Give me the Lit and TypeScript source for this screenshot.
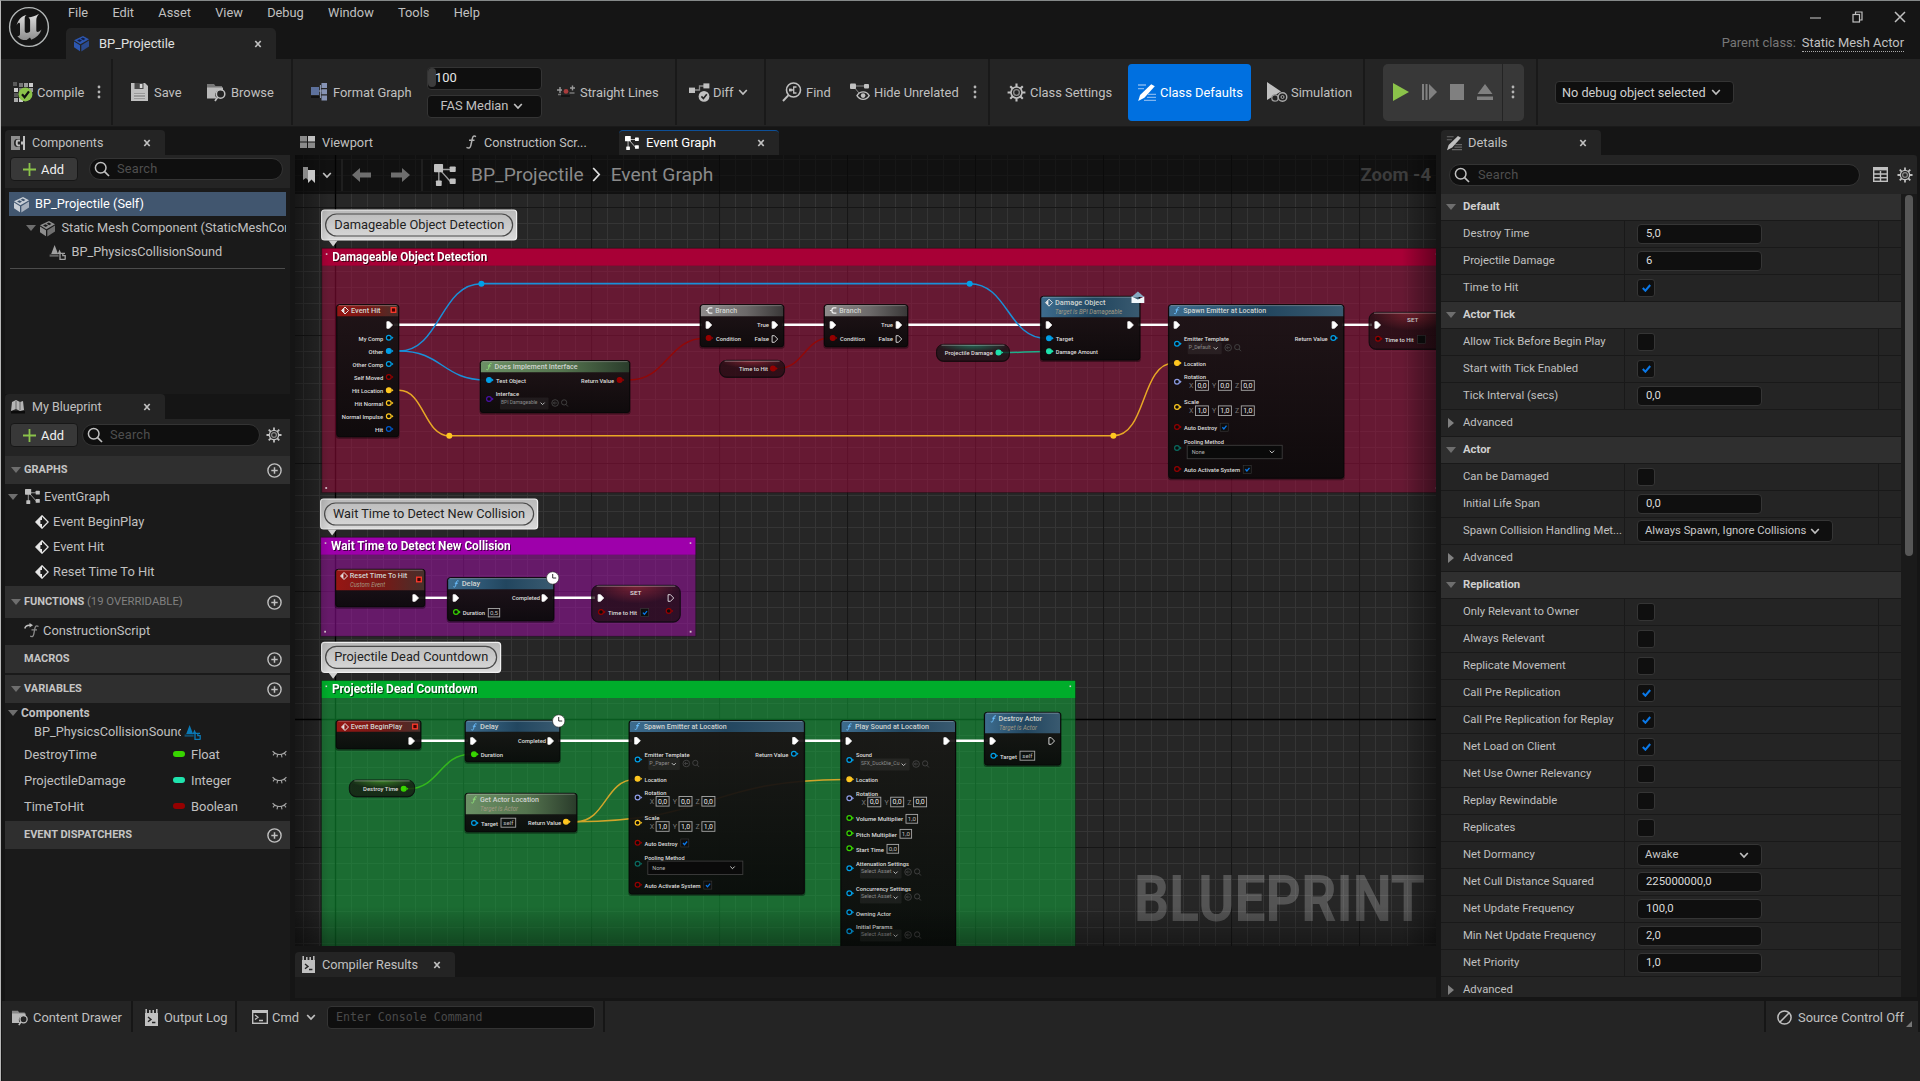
import { LitElement, html, svg, css, nothing } from "lit";
import { customElement } from "lit/decorators.js";

/* ---------- icons ---------- */
const icon = (w: number, h: number, body: unknown, vb = `0 0 ${w} ${h}`) =>
  html`<svg class="ic" width=${w} height=${h} viewBox=${vb} fill="none">${body}</svg>`;

const chevron = () => icon(10, 8, svg`<path d="M1.2 2l3.8 4 3.8-4" stroke="#c0c0c0" stroke-width="1.7"/>`);
const closeX = () => icon(8, 8, svg`<path d="M1.3 1l5.4 6M6.7 1L1.3 7" stroke="#c0c0c0" stroke-width="1.7"/>`);
const triDown = () => icon(10, 6, svg`<path d="M0 0h10L5 6z" fill="#6e6e6e"/>`);
const triRight = () => icon(6, 10, svg`<path d="M0 0v10l6-5z" fill="#808080"/>`);
const dots = () => icon(4, 14, svg`<g fill="#b4b4b4"><circle cx="2" cy="2" r="1.4"/><circle cx="2" cy="7" r="1.4"/><circle cx="2" cy="12" r="1.4"/></g>`);
const lens = () => icon(16, 16, svg`<circle cx="6.7" cy="6.7" r="5.3" stroke="#c0c0c0" stroke-width="1.5"/><path d="M10.6 10.6l4.4 4.4" stroke="#c0c0c0" stroke-width="1.7"/>`);
const plus = () => icon(13, 13, svg`<path d="M6.5 0v13M0 6.5h13" stroke="#8bc34a" stroke-width="1.8"/>`);
const addCircle = () => icon(15, 15, svg`<circle cx="7.5" cy="7.5" r="6.6" stroke="#c0c0c0" stroke-width="1.4"/><path d="M7.5 4.3v6.4M4.3 7.5h6.4" stroke="#c0c0c0" stroke-width="1.5"/>`);
const gear = (s = 16) => icon(s, s, svg`
  <g stroke="#c0c0c0" stroke-width="2.2"><path d="M10 .6v18.8M.6 10h18.8M3.4 3.4l13.2 13.2M16.6 3.4L3.4 16.6"/></g>
  <circle cx="10" cy="10" r="6.6" fill="#c0c0c0"/><circle cx="10" cy="10" r="4.9" fill="#242424"/>
  <circle cx="10" cy="10" r="3" stroke="#8a8a8a" stroke-width="1.5"/>`, "0 0 20 20");
const cube = (c: string, d: string) => icon(17, 17, svg`
  <path d="M1 5.3L10 1l6 3.2-8.6 5z" fill=${c}/><path d="M1 6.5l6 3.8v6L1 12.3z" fill=${c}/><path d="M8.3 10.3L16 5.6v5.8l-7.7 5z" fill=${c} opacity=".75"/>
  <path d="M4 5.4l2.4-1.2L9 5.6 6.8 7zM7.6 3.7l2.2-1.1 2.7 1.4-2.2 1.2z" fill=${d}/>`);
const graphIc = (s = 16, c = "#c0c0c0") => icon(s, s, svg`
  <path d="M4 4h9M5 5l8 9M3.5 5v9" stroke=${c} stroke-width="1" opacity=".8"/>
  <g fill=${c}><rect width="6.6" height="6" rx=".6"/><rect x="11.4" y="1.8" width="4.4" height="4" rx=".6"/><rect x="11.4" y="10.6" width="4.4" height="4" rx=".6"/><rect x="1.4" y="12" width="4.2" height="4" rx=".6"/></g>`, "0 0 16 16");
const logIc = () => icon(13, 17, svg`<path d="M0 4h13v13H0z" fill="#c0c0c0"/><path d="M1.2 0v5M4.8 1v4M8.2 1v4M11.8 0v5" stroke="#c0c0c0" stroke-width="1.5"/>
  <path d="M3 8l3 2.4-3 2.4M7 13.5h3.4" stroke="#242424" stroke-width="1.4"/>`);
const folder = (s: number, a: string) => icon(s, s, svg`<path d="M0 2h7l1.5 2H15v3H0z" fill=${a}/><path d="M0 5.4h16V9a4.6 4.6 0 0 0-6 7.4H0z" fill="#b9b9b9"/>
  <circle cx="13.6" cy="12" r="4.2" stroke="#c0c0c0" stroke-width="1.5"/><path d="M10.6 15.2L8 19" stroke="#c0c0c0" stroke-width="1.7"/>`, "0 0 20 20");
const eventIc = () => icon(14, 14, svg`<path d="M7 .8L13.2 7 7 13.2.8 7z" stroke="#e6e6e6" stroke-width="1.3"/><path d="M7 1v4h2v4H7v4L1 7z" fill="#e6e6e6"/><path d="M5.4 5H9v4H5.4z" fill="#1a1a1a"/>`);
const cones = (c: string) => icon(17, 16, svg`<path d="M5.6 1l3.5 9H2.2zM10.5 5.4l2 4.6H8.6z" fill=${c}/><path d="M.6 10.5h9v2.2h-9z" fill=${c} opacity=".55"/><path d="M16 9.4h-5v6h5M13.8 8.7v3h2.4v4" stroke=${c} stroke-width="1.3"/>`);
const lashes = () => icon(15, 8, svg`<path d="M.6 1.2c3.6 4.4 10.2 4.4 13.8 0M2.6 3.2L1 5.4M5.6 4.6l-.6 2.7M9.4 4.6l.6 2.7M12.4 3.2L14 5.4" stroke="#a5a5a5" stroke-width="1.1"/>`);
const pencil = (c: string, l: string, s = 19) => icon(s, s, svg`<path d="M1 2h8M1 5.6h6M11 11.4h8M10 14.4h9M7 17.4h12" stroke=${l} stroke-width="1.3"/><path d="M14.2 1.2l3.6 2L7.4 14.8 1.2 18l1.9-6z" fill=${c}/>`, "0 0 19 19");

const compileIc = () => icon(20, 20, svg`
  <g fill="#9c9c9c"><rect width="4" height="4" fill="#5a5a5a"/><rect x="6" y="1" width="4" height="4" fill="#777"/><rect x="11" y="1" width="4" height="4"/><rect x="16" y="1" width="4" height="4" fill="#ccc"/>
  <rect x="1" y="6" width="4" height="4" fill="#ccc"/><rect x="6" y="6" width="4" height="4" fill="#777"/><rect x="1" y="11" width="4" height="4" fill="#5a5a5a"/><rect x="1" y="16" width="4" height="4" fill="#aaa"/><rect x="6" y="16" width="4" height="4" fill="#ccc"/><rect x="16" y="6" width="4" height="4"/></g>
  <circle cx="12.4" cy="12.4" r="7" fill="#8bc34a"/><path d="M9 12.2l2.6 3L16 9.4" stroke="#111" stroke-width="2.2"/>`);
const saveIc = () => icon(20, 20, svg`<path d="M1 1h14l3 3v15H1z" fill="#c0c0c0"/><path d="M4.5 1h9v6h-9z" fill="#4a4a4a"/><path d="M9.8 2h2.6v4H9.8z" fill="#d8d8d8"/><path d="M4 11h11v6H4z" fill="#9a9a9a"/><path d="M4 12.5h11M4 15.5h11" stroke="#c8c8c8"/>`);
const formatIc = () => icon(20, 20, svg`<rect x="2" y="5" width="8" height="8" fill="#5d719c"/><path d="M12.5 1h5.5v5h-5.5zM12.5 7.3h5.5v5h-5.5zM12.5 13.6h5.5v5h-5.5z" fill="#8693b5"/><path d="M2 15h9" stroke="#111" stroke-width="2"/><path d="M10 9h2.5M11.4 3v13" stroke="#9aa5c0"/>`);
const straightIc = () => icon(20, 20, svg`<path d="M1 8h5M4 5v6M14 6h5M16.5 3.5v5" stroke="#9a9a9a" stroke-width="1.4"/><path d="M5 14h9" stroke="#111" stroke-width="1.6"/><circle cx="10" cy="9.4" r="2.4" fill="#a83c3c"/><path d="M2 12.5h3M13.5 11h5" stroke="#777" stroke-width="1.4"/>`);
const diffIc = () => icon(21, 20, svg`<path d="M5 8h5.5V4H16" stroke="#8a8a8a" stroke-width="1.3"/><rect y="5.6" width="6" height="5.4" fill="#c0c0c0"/><rect x="14.4" y="1.4" width="6" height="5" fill="#c0c0c0"/><circle cx="15" cy="14.4" r="5.4" fill="#c0c0c0"/><path d="M12.4 14.4l2 2.2 3.4-4.4" stroke="#242424" stroke-width="1.6"/>`);
const findIc = () => icon(20, 20, svg`<circle cx="11.5" cy="8" r="7" stroke="#c0c0c0" stroke-width="1.6"/><path d="M6.3 13.4L1 19" stroke="#c0c0c0" stroke-width="2"/><path d="M14.5 5h-2.8v6h2.8M8 8h3.7" stroke="#c0c0c0" stroke-width="1.3"/><rect x="7" y="6.6" width="2.8" height="2.8" fill="#c0c0c0"/>`);
const hideIc = () => icon(20, 20, svg`<path d="M4 4h12M4 5l5 6" stroke="#8a8a8a"/><rect y="1.6" width="6" height="5.4" rx="1" fill="#c0c0c0"/><rect x="14" y="2" width="5" height="4.6" rx="1" fill="#c0c0c0"/><path d="M7 13.6c3-5 9.4-5 12.2 0-2.8 5-9.2 5-12.2 0z" fill="#242424" stroke="#c0c0c0" stroke-width="1.4"/><circle cx="13.1" cy="13.6" r="2.3" fill="#c0c0c0"/>`);
const simIc = () => icon(21, 21, svg`<path d="M0 0l14 9.5L0 18z" fill="#c0c0c0"/><circle cx="8" cy="16" r="3.2" fill="#242424" stroke="#999" stroke-width="1.3"/><circle cx="15.5" cy="15" r="4.3" fill="#242424" stroke="#aaa" stroke-width="1.4"/><circle cx="15.5" cy="15" r="1.5" stroke="#aaa"/>`);
const ueLogo = () => icon(42, 42, svg`
  <defs><linearGradient id="ug" x1="0" y1="0" x2="0" y2="1"><stop offset="0" stop-color="#e0e0e0"/><stop offset="1" stop-color="#8c8c8c"/></linearGradient></defs>
  <circle cx="21" cy="21" r="19.4" stroke="#b4b8b8" stroke-width="1.4"/>
  <path d="M8.5 19.5C10 14 13.5 10 18.5 9c-1.3 1-1.8 2-1.8 3.800v12c0 1.300.9 2.100 2 2.100 1.400 0 2.600-.8 3.400-1.700V14.600c0-1.500-.5-2.400-1.600-3.200C24 11 27.600 9.900 31 7.800c-1.900 2.300-2.700 4-2.700 6.400v10.400c0 1 .6 1.400 1.300 1.400 1.100 0 2.600-1 3.900-2.500-1.600 4.900-5.200 8.300-10.200 10.200l-1.300-2.300-3.400 2.700c-4 .2-7.300-1.300-9.300-4.200 1.500.2 2.700-.4 2.700-2v-9.600c0-1-.4-1.500-1.100-1.500-.8 0-1.500.9-2.400 2.700z" fill="url(#ug)"/>`);
const fnIc = (c = "#b0b0b0") => icon(12, 14, svg`<path d="M11 1.6C8.2 0 7.6 2 7 5L5.8 10.6C5.2 13 4 13.7 1.5 12.4M4 5.3h5.5" stroke=${c} stroke-width="1.5"/>`);

/* ---------- graph canvas ---------- */
const C = {
  obj: "#00a0e8", bool: "#950000", vec: "#ffc720", rot: "#8f9ee8", flt: "#38d500",
  int: "#1fe3ad", cls: "#4a10a8", enm: "#0a6b60", hit: "#0059cb",
};
const ends = (x: number, y: number, s: string, w: number, cls = "pin", dy = 2.2) =>
  svg`<text class=${cls} x=${x} y=${y + dy} textLength=${w} lengthAdjust="spacingAndGlyphs">${s}</text>`;
const pin = (x: number, y: number, c: string, on = false) => svg`
  <circle cx=${x} cy=${y} r="2.4" fill=${on ? c : "#0b0b0b"} stroke=${c} stroke-width="1.2"/><path d=${`M${x + 2.9} ${y - 1.5}l1.8 1.5-1.8 1.5z`} fill=${c}/>`;
const exec = (x: number, y: number, on = true) =>
  svg`<path d=${`M${x - 2.6} ${y - 3.3}h2.4l3.2 3.3-3.2 3.3h-2.4z`} fill=${on ? "#fff" : "none"} stroke="#fff" stroke-width=".8"/>`;
const fGlyph = (x: number, y: number, c = "#6cc0ff") =>
  svg`<path d=${`M${x + 2.6} ${y - 3}c-1.6-.7-2 .3-2.3 1.7l-.7 3c-.3 1.3-1 1.6-2.2 1M${x - 1.2} ${y - 0.8}h3`} stroke=${c} stroke-width="1" fill="none"/>`;
const diamond = (x: number, y: number) =>
  svg`<path d=${`M${x} ${y - 3.5}l3.5 3.5-3.5 3.5-3.5-3.5z`} fill="none" stroke="#e8e8e8" stroke-width="1"/><path d=${`M${x - 0.6} ${y - 2.8}v5.6L${x - 3.2} ${y}z`} fill="#e8e8e8"/>`;
const branchGlyph = (x: number, y: number) =>
  svg`<path d=${`M${x + 3} ${y - 2.6}h-2.5q-2 0-2 2.6t2 2.6h2.5M${x - 3.5} ${y}h2`} stroke="#eee" stroke-width="1.2" fill="none"/>`;
const check = (x: number, y: number, on = true) => svg`
  <rect x=${x} y=${y} width="8" height="8" fill="#0d0d0d" stroke="#3a3a3a" stroke-width=".6"/>
  ${on ? svg`<path d=${`M${x + 2.2} ${y + 4}l1.5 1.7 2.6-3.2`} stroke="#0a78e8" stroke-width="1.3" fill="none"/>` : nothing}`;
const vbox = (x: number, y: number, w: number, s: string, h = 9.6) => svg`
  <rect x=${x} y=${y - h / 2} width=${w} height=${h} fill="none" stroke="#a8a8a8" stroke-width=".9"/>
  <text class=${h < 9.5 ? "val small" : "val"} x=${x + w / 2} y=${y + 2.3} text-anchor="middle">${s}</text>`;
const axes = (px: number, y: number, v: string) => ["X", "Y", "Z"].map((a, i) => svg`
  <text class="axis" x=${px + 14.3 + i * 22.9} y=${y + 2.5} text-anchor="middle">${a}</text>${vbox(px + 18.5 + i * 22.9, y, 13, v)}`);
const asset = (x: number, y: number, w: number, s: string, tw: number) => svg`
  <rect x=${x} y=${y - 5.5} width=${w} height="12" rx="1" fill="#fff" opacity=".06"/>
  ${ends(x + 1, y - 1, s, tw, "dim")}
  <path d=${`M${x + w - 8} ${y - 0.4}l2 2 2-2`} stroke="#bbb" stroke-width="1" fill="none"/>
  <g stroke="#444" stroke-width=".9" fill="none"><circle cx=${x + w + 6.5} cy=${y} r="3.3"/><path d=${`M${x + w + 8.3} ${y}h-3.5m1.5-1.5l-1.5 1.5 1.5 1.5`}/>
  <circle cx=${x + w + 15.5} cy=${y - 0.6} r="2.6"/><path d=${`M${x + w + 17.3} ${y + 1.3}l2 2.2`}/></g>`;
const node = (x: number, y: number, w: number, h: number, th: number, tint: string) => svg`
  <rect x=${x - 1} y=${y} width=${w + 2} height=${h + 2} rx="3" fill="#000" opacity=".4"/>
  <rect x=${x} y=${y} width=${w} height=${h} rx="2.5" fill="url(#body)" stroke="#080808" stroke-width="1"/>
  <path d=${`M${x + 0.5} ${y + th}V${y + 2.5}q0-2 2-2h${w - 5}q2 0 2 2V${y + th}z`} fill=${`url(#${tint})`}/>
  <path d=${`M${x + 2} ${y + 0.9}h${w - 4}`} stroke="#fff" opacity=".3" stroke-width=".9"/>`;
const pill = (x: number, y: number, w: number, h: number, tint: string) => svg`
  <rect x=${x} y=${y + 0.8} width=${w} height=${h} rx="7" fill="#000" opacity=".4"/>
  <rect x=${x} y=${y} width=${w} height=${h} rx="7" fill="#160d10" fill-opacity=".55" stroke="#0a0a0a" stroke-width=".8"/>
  <rect x=${x + 0.8} y=${y + 0.6} width=${w - 1.6} height=${h - 1.6} rx="6.5" fill=${`url(#${tint})`}/>
  <path d=${`M${x + 5} ${y + 0.9}h${w - 10}`} stroke="#fff" opacity=".4" stroke-width=".9"/>`;
const wire = (x1: number, y1: number, x2: number, y2: number, c: string, k = 0.5) =>
  svg`<path d=${`M${x1} ${y1}C${x1 + (x2 - x1) * k} ${y1} ${x2 - (x2 - x1) * k} ${y2} ${x2} ${y2}`} stroke=${c} stroke-width="1.5" fill="none"/>`;
const run = (x1: number, x2: number, y: number) => svg`<path d=${`M${x1} ${y}H${x2}`} stroke="#fff" stroke-width="2.4"/>`;
const knot = (x: number, y: number, c: string) => svg`<circle cx=${x} cy=${y} r="3" fill=${c}/>`;
const clock = (x: number, y: number) => svg`<circle cx=${x} cy=${y} r="6.2" fill="#fff" stroke="#222" stroke-width=".6"/><path d=${`M${x} ${y - 4}v4h3.5`} stroke="#333" stroke-width="1" fill="none"/>`;
const redBox = (x: number, y: number) => svg`<rect x=${x - 2.3} y=${y - 2.3} width="4.6" height="4.6" fill="#400" stroke="#ff3a2c" stroke-width="1.3"/>`;
const region = (x: number, y: number, w: number, h: number, th: number, head: string, fill: string, s: string, tw: number) => svg`
  <rect x=${x} y=${y + th} width=${w} height=${h - th} fill=${fill} opacity=".52"/>
  <rect x=${x} y=${y} width=${w} height=${th} fill=${head}/>
  <rect x=${x} y=${y} width=${w} height=${h} fill="none" stroke="#000" opacity=".3"/>
  <g fill="#d8c8d0"><rect x=${x + 4} y=${y + 5} width="1.6" height="1.6"/><rect x=${x + 3.5} y=${y + h - 5.5} width="1.8" height="1.8"/><rect x=${x + w - 6} y=${y + 5} width="1.6" height="1.6"/><rect x=${x + w - 6} y=${y + h - 5.5} width="1.8" height="1.8"/></g>
  ${ends(x + 10.4, y + 12.8, s, tw, "ttl", 0)}`;
const bubble = (x: number, y: number, w: number, s: string, tx: number, tw: number) => svg`
  <rect x=${x} y=${y} width=${w} height="30" rx="3" fill="url(#bub)" stroke="#f0f0f0" stroke-width="1.2"/>
  <path d=${`M${x + 7} ${y + 30.5}h9l-4.5 6z`} fill="#d0d0d0"/>
  <rect x=${x + 4} y=${y + 4} width=${w - 8} height="22" rx="11" fill="none" stroke="#4a4a4a" stroke-width="1.2"/>
  ${ends(tx, y + 18.8, s, tw, "bubt", 0)}`;

const spawn = (x: number, y: number, tmpl: string, aw: number, tw: number) => {
  const p = x + 8.3, l = x + 15.3;
  return svg`${node(x, y, 175, 173.5, 11.5, "blue")}
    ${fGlyph(x + 8, y + 6)}${ends(x + 14.5, y + 5.8, "Spawn Emitter at Location", 83, "title", 2.6)}
    ${exec(x + 8, y + 20.3)}${exec(x + 166, y + 20.3)}
    ${ends(x + 126, y + 34, "Return Value", 33)}${pin(x + 164.6, y + 33.3, C.obj)}
    ${pin(p, y + 39, C.obj)}${ends(l, y + 34, "Emitter Template", 45)}${asset(x + 19, y + 43, aw, tmpl, tw)}
    ${pin(p, y + 58.3, C.vec, true)}${ends(l, y + 59, "Location", 22)}
    ${pin(p, y + 77, C.rot)}${ends(l, y + 72, "Rotation", 22)}${axes(p, y + 80.8, "0,0")}
    ${pin(p, y + 102.3, C.vec)}${ends(l, y + 97.3, "Scale", 15)}${axes(p, y + 106, "1,0")}
    ${pin(p, y + 122.3, C.bool)}${ends(l, y + 123, "Auto Destroy", 33)}${check(x + 51.5, y + 118.5)}
    ${pin(p, y + 143.3, C.enm)}${ends(l, y + 137, "Pooling Method", 40)}
    <rect x=${x + 18.5} y=${y + 140.6} width="95" height="13.4" fill="#0a0a0a" stroke="#3d3d3d" stroke-width=".9"/>
    ${ends(x + 23, y + 147.3, "None", 13, "dim2")}<path d=${`M${x + 101} ${y + 146}l2.2 2.2 2.2-2.2`} stroke="#ccc" fill="none"/>
    ${pin(p, y + 164.3, C.bool)}${ends(l, y + 165, "Auto Activate System", 56)}${check(x + 74.5, y + 160.6)}`;
};
const branch = (x: number) => svg`${node(x, 304.7, 83.2, 42, 11.5, "grey")}
  ${branchGlyph(x + 9, 310.5)}${ends(x + 14.8, 310.5, "Branch", 22, "title", 2.6)}
  ${exec(x + 8.3, 325)}${ends(x + 56.6, 325.2, "True", 12)}${exec(x + 74.3, 325)}
  ${pin(x + 8.3, 338, C.bool, true)}${ends(x + 15.6, 339, "Condition", 25)}${ends(x + 54.2, 339, "False", 14.5)}${exec(x + 74.3, 339, false)}`;

@customElement("blueprint-graph")
export class BlueprintGraph extends LitElement {
  static styles = css`
    :host { display: block; width: 1141px; height: 791px; overflow: hidden; }
    svg { display: block; }
    text { font-family: Roboto, sans-serif; }
    .pin { font-size: 6.2px; font-weight: 500; fill: #dedede; }
    .title { font-size: 7.6px; font-weight: 500; fill: #d0d4d0; }
    .sub { font-size: 6.6px; font-style: italic; fill: #a39a84; }
    .dim { font-size: 6.2px; fill: #8c8c8c; }
    .dim2 { font-size: 6.2px; fill: #b5b5b5; }
    .val { font-size: 7px; fill: #e8e8e8; }
    .small { font-size: 6.2px; fill: #bdbdbd; }
    .axis { font-size: 7px; fill: #777; }
    .ttl { font-size: 12.8px; font-weight: 700; fill: #fff; filter: drop-shadow(1px 1px 0 rgba(0, 0, 0, .6)); }
    .bubt { font-size: 13px; fill: #222; }
    .mark { font-size: 65px; font-weight: 700; fill: #fff; opacity: .21; }
  `;
  render() {
    const grad = (id: string, a: string, b: string, c: string) =>
      svg`<linearGradient id=${id}><stop offset="0" stop-color=${a}/><stop offset=".55" stop-color=${b}/><stop offset="1" stop-color=${c}/></linearGradient>`;
    const glow = (id: string, c: string) =>
      svg`<radialGradient id=${id} cx=".5" cy="0" r=".5"><stop offset="0" stop-color=${c} stop-opacity=".6"/><stop offset="1" stop-color=${c} stop-opacity=".06"/></radialGradient>`;
    const pinRow = (y: number, s: string, x: number, c: string, on = false) =>
      svg`${ends(x, y + 0.8, s, 383.2 - x)}${pin(388.8, y, c, on)}`;
    return html`<svg width="1141" height="791" viewBox="295 155 1141 791">
      <defs>
        <pattern id="minor" x="335" y="719" width="16" height="16" patternUnits="userSpaceOnUse"><path d="M.5 0v16M0 .5h16" stroke="#353535" stroke-width="1"/></pattern>
        <pattern id="major" x="335" y="719" width="128" height="128" patternUnits="userSpaceOnUse"><path d="M.5 0v128M0 .5h128" stroke="#161616" stroke-width="1.2"/></pattern>
        ${grad("red", "#961613", "#741a17", "#46302c")}
        ${grad("blue", "#3d6c8e", "#22465f", "#395a70")}
        ${grad("green", "#6b9065", "#55744f", "#2a3c2b")}
        ${grad("grey", "#8e8b8b", "#6c6969", "#3a3838")}
        <linearGradient id="body" x1="0" y1="0" x2="0" y2="1"><stop offset="0" stop-color="#1c1517" stop-opacity=".88"/><stop offset="1" stop-color="#0a0a0a" stop-opacity=".9"/></linearGradient>
        <linearGradient id="bub" x1="0" y1="0" x2="0" y2="1"><stop offset="0" stop-color="#b9b9b9"/><stop offset="1" stop-color="#dadada"/></linearGradient>
        ${glow("gRed", "#b03040")}${glow("gTeal", "#1fa07c")}${glow("gGreen", "#4fb52c")}
        <linearGradient id="vl"><stop offset="0" stop-opacity=".4"/><stop offset="1" stop-opacity="0"/></linearGradient>
        <linearGradient id="vr"><stop offset="0" stop-opacity="0"/><stop offset="1" stop-opacity=".4"/></linearGradient>
        <linearGradient id="vb" x1="0" y1="0" x2="0" y2="1"><stop offset="0" stop-opacity="0"/><stop offset="1" stop-opacity=".35"/></linearGradient>
      </defs>
      <rect x="295" y="155" width="1141" height="791" fill="#262626"/>
      <rect x="295" y="155" width="1141" height="791" fill="url(#minor)"/>
      <rect x="295" y="155" width="1141" height="791" fill="url(#major)"/>
      <path d="M335.5 155v791M295 719.5h1141" stroke="#000" stroke-width="1.3"/>

      ${region(321.8, 248.3, 1120, 244.3, 17.5, "#a80036", "#a20e40", "Damageable Object Detection", 155)}
      ${region(320.7, 537.3, 375, 99, 17.5, "#9e00ab", "#a210a6", "Wait Time to Detect New Collision", 179.5)}
      ${region(321.5, 680.5, 754, 275, 17.5, "#00ad2b", "#12ac3e", "Projectile Dead Countdown", 145.5)}
      ${bubble(321.6, 210, 195, "Damageable Object Detection", 334.3, 170)}
      ${bubble(320.6, 499, 217, "Wait Time to Detect New Collision", 333, 192)}
      ${bubble(321.6, 642.3, 179, "Projectile Dead Countdown", 334.3, 154)}

      ${run(394, 702, 324.8)}${run(782, 826, 324.8)}${run(906, 1042, 324.8)}${run(1138, 1170, 324.8)}${run(1342, 1372, 324.8)}
      ${wire(399, 351, 481.4, 283.7, "#1a90d8")}
      <path d="M481.4 283.6H969.7" stroke="#1a90d8" stroke-width="1.6"/>
      ${wire(969.7, 283.7, 1046, 338.3, "#1a90d8")}${wire(399, 351, 486, 380, "#1a90d8")}
      ${wire(399, 390.3, 449.3, 435.8, "#e8a825")}
      <path d="M449.3 435.8H1113.4" stroke="#e8a825" stroke-width="1.6"/>
      ${wire(1113.4, 435.8, 1174, 363, "#e8a825", 0.55)}
      ${wire(629, 380, 706, 338, "#920808")}${wire(778, 368.5, 830, 338, "#920808")}
      ${wire(1003, 352.6, 1046, 351.4, "#1fae8a")}
      ${knot(481.4, 283.7, C.obj)}${knot(969.7, 283.7, C.obj)}${knot(449.3, 435.8, C.vec)}${knot(1113.4, 435.8, C.vec)}

      ${node(336.8, 304.7, 61.8, 132, 11.5, "red")}
      ${diamond(345, 310.5)}${ends(351, 310.5, "Event Hit", 29.5, "title", 2.6)}${redBox(393.5, 310)}${exec(389.5, 325)}
      ${pinRow(337.7, "My Comp", 358.6, C.obj)}${pinRow(350.9, "Other", 368.6, C.obj, true)}${pinRow(364, "Other Comp", 352.5, C.obj)}
      ${pinRow(377, "Self Moved", 354, C.bool)}${pinRow(390.2, "Hit Location", 352, C.vec, true)}${pinRow(403, "Hit Normal", 354.6, C.vec)}
      ${pinRow(416.2, "Normal Impulse", 341.8, C.vec)}${pinRow(429, "Hit", 375, C.hit)}

      ${node(480.4, 360.7, 149.2, 51.8, 11.5, "green")}
      ${fGlyph(489, 366.7, "#8fe07a")}${ends(494.6, 366.5, "Does Implement Interface", 83, "title", 2.6)}
      ${pin(489, 380, C.obj, true)}${ends(496, 381, "Test Object", 30)}${ends(581, 381, "Return Value", 33)}${pin(619.6, 380, C.bool, true)}
      ${pin(489, 399, C.cls)}${ends(495.7, 394, "Interface", 23.3)}${asset(500, 403, 48.6, "BPI Damageable", 36.5)}

      ${branch(700.4)}${branch(824.4)}
      ${pill(719.6, 360.3, 65, 17, "gRed")}${ends(739, 369, "Time to Hit", 29)}${pin(773, 368.5, C.bool, true)}
      ${pill(936.5, 344.3, 73, 17, "gTeal")}${ends(944.8, 353.2, "Projectile Damage", 48)}${pin(998.5, 352.5, C.int, true)}

      ${node(1040.8, 296.3, 99, 63.7, 21, "blue")}
      ${diamond(1049, 302.7)}${ends(1055, 302.7, "Damage Object", 50.5, "title", 2.6)}${ends(1055, 312, "Target is BPI Damageable", 67, "sub")}
      ${exec(1048.8, 325)}${exec(1130.4, 325)}${pin(1049, 338.3, C.obj, true)}${ends(1055.8, 339, "Target", 17.5)}${pin(1049, 351.3, C.int, true)}${ends(1055.8, 352, "Damage Amount", 42)}
      <path d="M1131.5 297l6.4-5.5 6.4 5.5z" fill="#86a9c0"/><path d="M1131.5 296.5l6.4 3 6.4-3v6.500h-12.8z" fill="#f2f8fc"/>

      ${spawn(1168.7, 304.7, "P_Default", 34, 22)}

      ${pill(1369, 312.3, 88, 37, "gRed")}${ends(1407, 319.5, "SET", 11.5, "pin", 2.5)}${exec(1377.5, 325)}
      ${pin(1378, 338.7, C.bool)}${ends(1385, 339.7, "Time to Hit", 28.7)}${check(1417.6, 335.3, false)}

      ${run(418, 450, 597.8)}${run(552, 595, 597.8)}
      ${node(335.7, 569.3, 89, 37.4, 21, "red")}
      ${diamond(344, 576)}${ends(349.7, 575.8, "Reset Time To Hit", 57.6, "title", 2.6)}${ends(350, 585, "Custom Event", 35, "sub")}${redBox(419, 579.5)}${exec(415.5, 598)}
      ${node(447.7, 577.7, 106, 43, 11.5, "blue")}
      ${fGlyph(456, 584)}${ends(461.7, 583.7, "Delay", 18.6, "title", 2.6)}${exec(455.7, 598)}${ends(512, 598, "Completed", 28)}${exec(544.6, 598)}
      ${pin(456, 612, C.flt)}${ends(462.7, 613, "Duration", 22.3)}${vbox(488.3, 612.7, 11.4, "0,5", 8.4)}${clock(552.7, 578)}
      ${pill(591.7, 585.3, 88.6, 36.7, "gRed")}${ends(630, 592.7, "SET", 11.5, "pin", 2.5)}${exec(600.7, 598)}${exec(670.7, 598, false)}
      ${pin(601, 612, C.bool)}${ends(608, 613, "Time to Hit", 29)}${check(640.7, 608.6)}${pin(668.7, 611, C.bool)}

      ${wire(576, 821.7, 635, 779.5, "#d0a52a")}${wire(576, 821.7, 845, 779.5, "#d0a52a")}
      ${run(414, 468, 740.8)}${run(558, 632, 740.8)}${run(798, 843, 740.8)}${run(950, 988, 740.8)}
      ${wire(408, 788.7, 471, 754.3, "#33b81c")}
      ${node(336.3, 720.3, 84.4, 28.4, 11.5, "red")}
      ${diamond(345, 727)}${ends(350.7, 726.7, "Event BeginPlay", 51.6, "title", 2.6)}${redBox(415, 726.5)}${exec(411.5, 741)}
      ${node(465.3, 720.3, 94.4, 41.4, 11.5, "blue")}
      ${fGlyph(474, 727)}${ends(480, 726.7, "Delay", 18.5, "title", 2.6)}${exec(473.3, 741)}${ends(518, 741, "Completed", 28)}${exec(550.5, 741)}
      ${pin(474, 754.3, C.flt, true)}${ends(480.7, 755.2, "Duration", 22.3)}${clock(558.7, 721)}
      ${pill(349.3, 780, 65.4, 16.7, "gGreen")}${ends(363, 789.2, "Destroy Time", 35.3)}${pin(403.7, 788.7, C.flt, true)}
      ${node(465.3, 793.3, 111.4, 38.4, 21, "green")}
      ${fGlyph(474, 800, "#8fe07a")}${ends(480, 799.7, "Get Actor Location", 59, "title", 2.6)}${ends(480, 809, "Target is Actor", 38, "sub")}
      ${pin(474, 823, C.obj)}${ends(481, 823.5, "Target", 17)}${vbox(501, 822.7, 14.7, "self", 9)}${ends(528, 822.5, "Return Value", 33)}${pin(566, 821.7, C.vec, true)}
      ${spawn(629.3, 720.5, "P_Paper", 31.5, 20)}

      ${node(841, 720.5, 114.5, 240, 11.5, "blue")}
      ${fGlyph(849, 727)}${ends(855, 726.5, "Play Sound at Location", 74, "title", 2.6)}${exec(848.6, 741)}${exec(946.5, 741)}
      ${pin(849.3, 760, C.obj)}${ends(856, 755.2, "Sound", 16)}${asset(860, 764, 49.6, "SFX_DuckDie_Cu", 38.5)}
      ${pin(849.3, 779.3, C.vec, true)}${ends(856, 780.2, "Location", 22)}
      ${pin(849.3, 798.2, C.rot)}${ends(856, 793.3, "Rotation", 22)}${axes(849.3, 802, "0,0")}
      ${pin(849.3, 818, C.flt)}${ends(856, 819.2, "Volume Multiplier", 47)}${vbox(906, 818.8, 11.6, "1,0", 8.8)}
      ${pin(849.3, 833.3, C.flt)}${ends(856, 834.3, "Pitch Multiplier", 41)}${vbox(900, 833.8, 11.6, "1,0", 8.8)}
      ${pin(849.3, 848.3, C.flt)}${ends(856, 849.3, "Start Time", 28)}${vbox(887, 848.8, 11.6, "0,0", 8.8)}
      ${pin(849.3, 868.3, C.obj)}${ends(856, 863.3, "Attenuation Settings", 53)}${asset(860, 872, 41.6, "Select Asset", 30.5)}
      ${pin(849.3, 893.3, C.obj)}${ends(856, 888.3, "Concurrency Settings", 55)}${asset(860, 897, 41.6, "Select Asset", 30.5)}
      ${pin(849.3, 912.3, C.obj)}${ends(856, 913.5, "Owning Actor", 35)}
      ${pin(849.3, 931.3, C.obj)}${ends(856, 926.5, "Initial Params", 36.5)}${asset(860, 935, 41.6, "Select Asset", 30.5)}

      ${node(984.6, 712.3, 76, 52.7, 21, "blue")}
      ${fGlyph(993.4, 719)}${ends(998.5, 718.7, "Destroy Actor", 43.5, "title", 2.6)}${ends(999, 728, "Target is Actor", 38, "sub")}
      ${exec(992.6, 741)}${exec(1051.5, 741, false)}${pin(993.4, 755.7, C.obj)}${ends(1000, 756.5, "Target", 17)}${vbox(1020, 755.7, 14.7, "self", 9)}

      <text class="mark" x="1134" y="920.5" textLength="291" lengthAdjust="spacingAndGlyphs">BLUEPRINT</text>
      <rect x="295" y="155" width="34" height="791" fill="url(#vl)"/><rect x="1402" y="155" width="34" height="791" fill="url(#vr)"/><rect x="295" y="906" width="1141" height="40" fill="url(#vb)"/>
    </svg>`;
  }
}

/* ---------- details ---------- */
type Row = [string, string, (string | boolean)?];
const ROWS: Row[] = [
  ["head", "Default"], ["num", "Destroy Time", "5,0"], ["num", "Projectile Damage", "6"], ["chk", "Time to Hit", true],
  ["head", "Actor Tick"], ["chk", "Allow Tick Before Begin Play", false], ["chk", "Start with Tick Enabled", true], ["num", "Tick Interval (secs)", "0,0"], ["adv", "Advanced"],
  ["head", "Actor"], ["chk", "Can be Damaged", false], ["num", "Initial Life Span", "0,0"], ["wide", "Spawn Collision Handling Met...", "Always Spawn, Ignore Collisions"], ["adv", "Advanced"],
  ["head", "Replication"], ["chk", "Only Relevant to Owner", false], ["chk", "Always Relevant", false], ["chk", "Replicate Movement", false], ["chk", "Call Pre Replication", true],
  ["chk", "Call Pre Replication for Replay", true], ["chk", "Net Load on Client", true], ["chk", "Net Use Owner Relevancy", false], ["chk", "Replay Rewindable", false], ["chk", "Replicates", false],
  ["sel", "Net Dormancy", "Awake"], ["num", "Net Cull Distance Squared", "225000000,0"], ["num", "Net Update Frequency", "100,0"], ["num", "Min Net Update Frequency", "2,0"], ["num", "Net Priority", "1,0"], ["adv", "Advanced"],
];

const shared = css`
  * { box-sizing: border-box; }
  .ic { display: block; flex: none; }
  .tab { display: flex; align-items: center; width: 160px; height: 25px; background: #242424; border-radius: 4px 4px 0 0; font-size: 12.5px; color: #c0c0c0; flex: none; }
  .tab .name { padding-bottom: 1px; }
  .search { display: flex; align-items: center; background: #0f0f0f; border: 1px solid #343434; border-radius: 12px; height: 22px; font-size: 12.8px; color: #4e4e4e; letter-spacing: .2px; }
  .search span { padding-bottom: 1px; }
`;

@customElement("details-panel")
export class DetailsPanel extends LitElement {
  static styles = [shared, css`
    :host { display: flex; flex-direction: column; width: 476px; height: 867px; }
    .tab { padding: 0 14px 0 5px; }
    .tab .name { margin: 0 auto 0 6px; font-size: 12.9px; }
    .bar { display: flex; align-items: center; height: 39px; background: #242424; padding: 0 4px 0 8px; flex: none; border-top-right-radius: 3px; }
    .search { width: 412px; padding-left: 4px; gap: 8px; margin-right: 13px; }
    .gearbox { margin-left: 9px; }
    .body { display: flex; flex: 1; min-height: 0; background: #1a1a1a; }
    .rows { width: 460px; overflow: hidden; font-size: 11.3px; color: #c0c0c0; }
    .row { display: flex; height: 27px; border-bottom: 1px solid #191919; background: #242424; align-items: center; }
    .row .cap { padding-bottom: 2px; }
    .head { background: #2f2f2f; font-weight: 700; color: #cfcfcf; padding-left: 5px; gap: 7px; }
    .adv { padding-left: 7px; gap: 9px; }
    .key { width: 184px; height: 100%; padding: 0 0 2px 22px; border-right: 1px solid #191919; display: flex; align-items: center; white-space: nowrap; overflow: hidden; }
    .value { flex: 1; height: 100%; display: flex; align-items: center; padding-left: 12px; }
    .reset { width: 23px; height: 100%; border-left: 1px solid #191919; }
    .num, .sel { width: 125px; height: 20px; background: #0f0f0f; border: 1px solid #353535; border-radius: 4px; display: flex; align-items: center; padding: 0 0 1px 8px; color: #dcdcdc; }
    .sel { height: 22px; padding: 0 12px 1px 7px; justify-content: space-between; color: #c8c8c8; }
    .wide { width: 196px; }
    .chk { width: 18px; height: 18px; background: #0f0f0f; border: 1px solid #353535; border-radius: 3px; display: grid; place-items: center; }
    .thumb { width: 8px; height: 361px; border-radius: 4px; background: #575757; margin: 1px 0 0 4px; }
  `];
  render() {
    return html`
      <div class="tab">${pencil("#c0c0c0", "#666", 16)}<span class="name">Details</span>${closeX()}</div>
      <div class="bar">
        <div class="search">${lens()}<span>Search</span></div>
        ${icon(15, 15, svg`<rect x=".7" y=".7" width="13.6" height="13.6" stroke="#c0c0c0" stroke-width="1.4"/><path d="M0 2.200h15" stroke="#c0c0c0" stroke-width="2.400"/><path d="M1 7h13M1 10.800h13M7.500 4v10" stroke="#c0c0c0" stroke-width="1.4"/>`)}
        <span class="gearbox">${gear(16)}</span>
      </div>
      <div class="body">
        <div class="rows">${ROWS.map(([kind, name, v]) =>
          kind === "head" ? html`<div class="row head">${triDown()}<span class="cap">${name}</span></div>`
          : kind === "adv" ? html`<div class="row adv">${triRight()}<span class="cap">${name}</span></div>`
          : html`<div class="row"><div class="key">${name}</div><div class="value">
              ${kind === "chk" ? html`<span class="chk">${v ? icon(9, 8, svg`<path d="M.8 4l2.6 2.7L8.2 1" stroke="#0a78e8" stroke-width="2"/>`) : nothing}</span>`
                : kind === "num" ? html`<span class="num">${v}</span>`
                : html`<span class="sel ${kind}">${v}${chevron()}</span>`}
            </div><div class="reset"></div></div>`)}
        </div>
        <div class="thumb"></div>
      </div>`;
  }
}

/* ---------- shell ---------- */
@customElement("app-root")
export class AppRoot extends LitElement {
  static styles = [shared, css`
    :host { display: flex; flex-direction: column; width: 1920px; height: 1081px; overflow: hidden; background: #151515; color: #c0c0c0; font: 12.9px Roboto, sans-serif; white-space: nowrap; border-top: 1px solid #858989; border-left: 1px solid #b8b8b8; box-sizing: border-box; }
    .top { display: flex; height: 58px; flex: none; }
    .logo { padding: 5px 0 0 6.5px; width: 65px; }
    .left { flex: 1; }
    .menu { display: flex; gap: 24.3px; height: 27px; align-items: center; padding: 0 0 5px 2px; font-size: 12.8px; }
    .doc { display: flex; align-items: center; width: 210px; height: 31px; background: #242424; border-radius: 5px 5px 0 0; padding: 0 14px 0 7px; gap: 9px; color: #e0e0e0; }
    .doc .name { flex: 1; padding-bottom: 1px; }
    .right { width: 200px; padding: 10px 16px 0 0; display: flex; flex-direction: column; align-items: flex-end; gap: 12px; }
    .win { display: flex; gap: 31px; align-items: center; margin-right: -2px; }
    .parent { display: flex; gap: 6px; color: #777; font-size: 12.9px; }
    .parent .cls { color: #c0c0c0; border-bottom: 1.5px dotted #aaa; height: 17px; }

    .tools { display: flex; height: 68px; background: #242424; flex: none; border-bottom: 1px solid #1a1a1a; }
    .grp { display: grid; align-items: center; justify-content: start; border-right: 2px solid #191919; margin-bottom: 1px; }
    .g1 { width: 112px; padding-left: 12px; grid-template-columns: 84px auto; }
    .g2 { width: 180px; padding-left: 17px; grid-template-columns: 77px auto; }
    .g3 { width: 384px; padding-left: 16px; grid-template-columns: 118px 129px auto; }
    .g4 { width: 89px; padding-left: 12px; }
    .g5 { width: 224px; padding-left: 16px; grid-template-columns: 68px 123px auto; }
    .g6 { width: 375px; padding-left: 16px; grid-template-columns: 122px 139px auto; }
    .g7 { width: 173px; padding-left: 18px; }
    .g8 { padding-left: 17px; border: 0; }
    .tool { display: flex; align-items: center; gap: 4px; height: 57px; }
    .box { width: 20px; display: flex; justify-content: center; flex: none; }
    .on { background: #0070e0; color: #fff; width: 123px; border-radius: 4px; padding-left: 8px; }
    .fields { display: flex; flex-direction: column; gap: 5px; }
    .field { width: 115px; height: 23px; background: #0f0f0f; border: 1px solid #343434; border-radius: 4px; display: flex; align-items: center; padding-bottom: 1px; }
    .field .knob { width: 8px; height: 19px; border-radius: 4px; background: #3c3c3c; }
    .field .num { color: #e6e6e6; margin-left: -1px; }
    .combo { justify-content: center; gap: 5px; padding-right: 5px; }
    .play { display: flex; width: 141px; height: 57px; border-radius: 5px; background: #383838; align-items: center; padding-left: 10px; gap: 13px; }
    .play .more { border-left: 1px solid #242424; height: 57px; display: flex; align-items: center; padding-left: 8px; margin-left: -4px; }
    .debug { width: 179px; height: 23px; background: #0f0f0f; border: 1px solid #343434; border-radius: 4px; display: flex; align-items: center; padding: 0 12px 0 6px; justify-content: space-between; color: #d0d0d0; font-size: 12.7px; }

    .main { display: flex; height: 874px; padding: 3px 0 0 4px; flex: none; }
    .side { width: 285px; margin-right: 5px; display: flex; flex-direction: column; }
    .side .tab { padding: 0 14px 0 6px; }
    .tab .name { flex: 1; margin-left: 7px; }
    .comp { height: 264px; display: flex; flex-direction: column; }
    .panel { background: #1a1a1a; flex: 1; display: flex; flex-direction: column; min-height: 0; }
    .pbar { display: flex; align-items: flex-start; background: #242424; height: 33px; padding: 2px 7px 0 5px; flex: none; }
    .pbar.tall { height: 37px; padding-top: 4px; }
    .add { width: 68px; height: 24px; background: #383838; border: 1px solid #171717; border-radius: 4px; color: #f0f0f0; display: flex; align-items: center; justify-content: center; gap: 5px; padding-right: 1px; }
    .pbar .search { margin-left: 11px; width: 194px; padding-left: 4px; gap: 7px; margin-top: 1px; }
    .pbar.tall .search { margin: 1px 6px 0 4px; width: 178px; }
    .pbar .g { margin-top: 4px; }
    .tree { padding: 4px 4px 0; }
    .tr { display: flex; align-items: center; height: 24px; overflow: hidden; font-size: 12.75px; }
    .tr .lbl { padding-bottom: 1px; }
    .t0 { background: #41566f; color: #fff; padding-left: 4px; gap: 5px; }
    .t1 { padding-left: 17px; gap: 3px; font-size: 12.7px; }
    .t1 .lbl { margin-left: 2.5px; }
    .t2 { padding-left: 40px; gap: 5.5px; }
    .rule { height: 1px; background: #4c4c4c; margin: 4px 1px 0; }
    .bp { flex: 1; display: flex; flex-direction: column; }
    .sec { display: flex; align-items: center; height: 28px; background: #2f2f2f; font-weight: 700; font-size: 11px; color: #c4c4c4; padding: 0 8.5px 0 6px; flex: none; margin-bottom: 2px; }
    .sec .tri { width: 13px; }
    .sec .lbl { flex: 1; padding-bottom: 1px; }
    .sec .lite { font-weight: 400; color: #808080; font-size: 11.3px; }
    .s32 { height: 32px; margin-top: 2px; }
    .s32 .lbl { padding-bottom: 2px; }
    .b0 { margin-bottom: 0; }
    .ln { display: flex; align-items: center; height: 25px; flex: none; }
    .l0 { padding-left: 3px; gap: 4px; }
    .l0 .gi { margin-left: 3px; }
    .l1 { padding-left: 30px; gap: 4px; }
    .l2 { padding-left: 19px; gap: 4px; height: 25px; margin-bottom: 2px; }
    .lc { padding-left: 3px; gap: 3px; height: 19px; font-weight: 700; font-size: 12px; }
    .lp { padding-left: 29px; height: 19px; gap: 3px; font-size: 12.75px; }
    .lp .clip { width: 147px; overflow: hidden; }
    .var { display: grid; grid-template-columns: 149px 18px 81px auto; padding-left: 19px; height: 26px; align-items: center; flex: none; }
    .var + .sec { margin-top: 2px; }
    .swatch { width: 12px; height: 6px; border-radius: 3px; }
    .green { background: #38d500; } .teal { background: #1fe3ad; } .red { background: #950000; }

    .center { width: 1141px; margin-right: 5px; display: flex; flex-direction: column; position: relative; }
    .tabs { display: flex; height: 25px; flex: none; font-size: 12.8px; align-items: center; }
    .tabs .a { width: 165px; padding: 0 0 1px 5px; display: flex; gap: 7px; align-items: center; }
    .tabs .b { width: 159px; padding: 0 0 1px 5px; display: flex; gap: 7px; align-items: center; font-size: 12.6px; }
    .tabs .c { border-top: 1px solid #0d4f97; color: #fff; padding: 0 14px 0 6px; font-size: 13.1px; }
    .crumbs { position: absolute; top: 25px; left: 0; width: 1141px; height: 39px; background: rgba(5, 5, 5, .62); display: flex; align-items: center; font-size: 19.2px; color: #8a8a8a; padding-left: 8px; }
    .crumbs .bar { width: 2px; height: 32px; background: #1f1f1f; margin: 0 9px 0 9px; }
    .crumbs .arr { margin-right: 20px; }
    .crumbs .arr2 { margin-right: 2px; }
    .crumbs .gi { margin: 0 15px 0 2px; }
    .crumbs .sep { margin: 0 10px 0 8px; }
    .crumbs .zoom { margin-left: auto; margin-right: 5px; font-weight: 700; color: #3c3c3c; font-size: 18.5px; }
    .bk { margin-right: 7px; }
    .results { padding-top: 6px; }
    .results .tab { padding: 0 14px 0 7px; font-size: 12.7px; }
    .results .tab .name { margin-left: 7px; }
    .results .pane { height: 21px; background: #1a1a1a; }

    .status { display: flex; flex: 1; background: #242424; margin-left: 1px; }
    .cell { display: flex; align-items: center; height: 31px; gap: 4px; border-right: 2px solid #161616; padding-top: 1px; }
    .c1 { width: 131px; padding-left: 10px; }
    .c2 { width: 104px; padding-left: 12px; gap: 6px; }
    .c3 { width: 368px; padding-left: 15px; }
    .c3 .chev { margin: 0 7px 0 3px; }
    .console { width: 268px; height: 23px; background: #0f0f0f; border: 1px solid #343434; border-radius: 4px; font: 11.6px "DejaVu Sans Mono", monospace; color: #4a4a4a; padding: 3px 0 0 8px; }
    .c4 { margin-left: auto; width: 156px; border-left: 2px solid #161616; border-right: 2px solid #161616; padding-left: 11px; gap: 6px; }
    .grip { align-self: flex-end; margin: 0 0 5px -4px; }
  `];

  private tool(ic: unknown, label: string, extra: unknown = nothing, cls = "") {
    return html`<div class="tool ${cls}"><span class="box">${ic}</span><span>${label}</span>${extra}</div>`;
  }
  private section(label: string, open: boolean, cls = "", lite = "") {
    return html`<div class="sec ${cls}"><span class="tri">${open ? triDown() : nothing}</span><span class="lbl">${label} <span class="lite">${lite}</span></span>${addCircle()}</div>`;
  }

  render() {
    return html`
      <div class="top">
        <div class="logo">${ueLogo()}</div>
        <div class="left">
          <div class="menu">${["File", "Edit", "Asset", "View", "Debug", "Window", "Tools", "Help"].map((m) => html`<span>${m}</span>`)}</div>
          <div class="doc">${cube("#2d57b0", "#13204a")}<span class="name">BP_Projectile</span>${closeX()}</div>
        </div>
        <div class="right">
          <div class="win">
            ${icon(11, 12, svg`<path d="M0 7h11" stroke="#8a8a8a" stroke-width="1.6"/>`)}
            ${icon(11, 12, svg`<path d="M3.5 3V1h6.5v8H8" stroke="#c0c0c0" stroke-width="1.2"/><rect x="1" y="3.5" width="6.5" height="7.5" stroke="#c0c0c0" stroke-width="1.2"/>`)}
            ${icon(12, 12, svg`<path d="M1 1l10 10M11 1L1 11" stroke="#c0c0c0" stroke-width="1.5"/>`)}
          </div>
          <div class="parent"><span>Parent class:</span><span class="cls">Static Mesh Actor</span></div>
        </div>
      </div>

      <div class="tools">
        <div class="grp g1">${this.tool(compileIc(), "Compile")}${dots()}</div>
        <div class="grp g2">${this.tool(saveIc(), "Save")}${this.tool(folder(20, "#777"), "Browse")}</div>
        <div class="grp g3">
          ${this.tool(formatIc(), "Format Graph")}
          <div class="fields">
            <div class="field"><span class="knob"></span><span class="num">100</span></div>
            <div class="field combo"><span>FAS Median</span>${chevron()}</div>
          </div>
          ${this.tool(straightIc(), "Straight Lines")}
        </div>
        <div class="grp g4">${this.tool(diffIc(), "Diff", chevron())}</div>
        <div class="grp g5">${this.tool(findIc(), "Find")}${this.tool(hideIc(), "Hide Unrelated")}${dots()}</div>
        <div class="grp g6">${this.tool(gear(19), "Class Settings")}${this.tool(pencil("#fff", "#7db4f0"), "Class Defaults", nothing, "on")}${this.tool(simIc(), "Simulation")}</div>
        <div class="grp g7"><div class="play">
          ${icon(16, 18, svg`<path d="M0 0l16 9-16 9z" fill="#8bc34a"/>`)}
          ${icon(15, 16, svg`<path d="M0 0h2v16H0zM3.5 0h2v16h-2zM7 0l8 8-8 8z" fill="#808080"/>`)}
          ${icon(14, 16, svg`<path d="M0 0h14v16H0z" fill="#808080"/>`)}
          ${icon(16, 16, svg`<path d="M8 0l7.5 10H.5zM0 12.5h16V16H0z" fill="#808080"/>`)}
          <span class="more">${dots()}</span>
        </div></div>
        <div class="grp g8"><div class="debug"><span>No debug object selected</span>${chevron()}</div></div>
      </div>

      <div class="main">
        <div class="side">
          <div class="comp">
            <div class="tab">${icon(14, 14, svg`<path d="M0 0h9v3H6.5C4 3 3 4.5 3 7s1 4 3.5 4H9v3H0z" fill="#8f8f8f"/><path d="M9 4.6H7c-1.7 0-1.7 4.8 0 4.8h2" stroke="#c0c0c0" stroke-width="2"/><path d="M10 5.5h2V0h2v14h-2V8.5h-2z" fill="#c0c0c0"/>`)}<span class="name">Components</span>${closeX()}</div>
            <div class="panel">
              <div class="pbar"><div class="add">${plus()}<span>Add</span></div><div class="search">${lens()}<span>Search</span></div></div>
              <div class="tree">
                <div class="tr t0">${cube("#c8ced6", "#41566f")}<span class="lbl">BP_Projectile (Self)</span></div>
                <div class="tr t1">${triDown()}${cube("#8e8e8e", "#1a1a1a")}<span class="lbl">Static Mesh Component (StaticMeshComponent0)</span></div>
                <div class="tr t2">${cones("#a0a0a0")}<span class="lbl">BP_PhysicsCollisionSound</span></div>
                <div class="rule"></div>
              </div>
            </div>
          </div>
          <div class="bp">
            <div class="tab">${icon(14, 14, svg`<path d="M1 2l4-2 4 2 3-1 1 9-4 1-4-2-5 2z" fill="#b5b5b5"/><path d="M5 1v8M9 2v8" stroke="#666"/><path d="M0 11h14v2.5H0z" fill="#0b0b0b"/>`)}<span class="name">My Blueprint</span>${closeX()}</div>
            <div class="panel">
              <div class="pbar tall"><div class="add">${plus()}<span>Add</span></div><div class="search">${lens()}<span>Search</span></div><span class="g">${gear(16)}</span></div>
              ${this.section("GRAPHS", true, "b0")}
              <div class="ln l0">${triDown()}<span class="gi">${graphIc(15)}</span><span>EventGraph</span></div>
              ${["Event BeginPlay", "Event Hit", "Reset Time To Hit"].map((e) => html`<div class="ln l1">${eventIc()}<span>${e}</span></div>`)}
              ${this.section("FUNCTIONS", true, "s32 b0", "(19 OVERRIDABLE)")}
              <div class="ln l2">${icon(15, 15, svg`<path d="M14.5 3.5c-2.6-1.5-3.3 0-3.8 2.6l-.9 5c-.5 2.3-1.4 3-3.6 2M7.5 6.8H13" stroke="#8a8a8a" stroke-width="1.3"/><path d="M.8 5.5C1.5 2.5 3 2 6 2.2" stroke="#c0c0c0" stroke-width="1.5"/><path d="M5.5 0v4.6L9 2.3z" fill="#c0c0c0"/>`)}<span>ConstructionScript</span></div>
              ${this.section("MACROS", false)}
              ${this.section("VARIABLES", true, "b0")}
              <div class="ln lc">${triDown()}<span>Components</span></div>
              <div class="ln lp"><span class="clip">BP_PhysicsCollisionSound</span>${cones("#0a78b4")}</div>
              ${[["DestroyTime", "green", "Float"], ["ProjectileDamage", "teal", "Integer"], ["TimeToHit", "red", "Boolean"]].map(([n, c, t]) => html`
                <div class="var"><span>${n}</span><span class="swatch ${c}"></span><span>${t}</span>${lashes()}</div>`)}
              ${this.section("EVENT DISPATCHERS", false)}
            </div>
          </div>
        </div>

        <div class="center">
          <div class="tabs">
            <div class="a">${icon(15, 12, svg`<path d="M0 0h7v5.5H0zM0 6.5h7V12H0z" fill="#8a8a8a"/><path d="M8 0h7v5.5H8z" fill="#c0c0c0"/><path d="M8 6.5h7V12H8z" fill="#8a8a8a"/>`)}<span>Viewport</span></div>
            <div class="b">${fnIc()}<span>Construction Scr...</span></div>
            <div class="tab c">${graphIc(14, "#fff")}<span class="name">Event Graph</span>${closeX()}</div>
          </div>
          <blueprint-graph></blueprint-graph>
          <div class="crumbs">
            <span class="bk">${icon(12, 16, svg`<path d="M0 0h5v13l-2-2-3 2z" fill="#8a8a8a"/><path d="M5 3h7v13l-3.5-3.5L5 16z" fill="#c8c8c8"/>`)}</span>${chevron()}
            <span class="bar"></span>
            <span class="arr">${icon(19, 14, svg`<path d="M0 7l8-7v4.5h11v5H8V14z" fill="#6e6e6e"/>`)}</span>
            <span class="arr2">${icon(19, 14, svg`<path d="M19 7l-8-7v4.5H0v5h11V14z" fill="#6e6e6e"/>`)}</span>
            <span class="bar"></span>
            <span class="gi">${graphIc(22)}</span>
            <span>BP_Projectile</span>
            <span class="sep">${icon(9, 15, svg`<path d="M1.2 1l6 6.5-6 6.5" stroke="#e0e0e0" stroke-width="1.7"/>`)}</span>
            <span>Event Graph</span>
            <span class="zoom">Zoom -4</span>
          </div>
          <div class="results"><div class="tab">${logIc()}<span class="name">Compiler Results</span>${closeX()}</div><div class="pane"></div></div>
        </div>

        <details-panel></details-panel>
      </div>

      <div class="status">
        <div class="cell c1">${folder(17, "#888")}<span>Content Drawer</span></div>
        <div class="cell c2">${logIc()}<span>Output Log</span></div>
        <div class="cell c3">${icon(16, 14, svg`<rect x=".7" y=".7" width="14.6" height="12.6" stroke="#c0c0c0" stroke-width="1.4"/><path d="M0 2h16" stroke="#c0c0c0" stroke-width="2"/><path d="M3 5l3 2.3-3 2.3M7 10.5h4" stroke="#c0c0c0" stroke-width="1.3"/>`)}<span>Cmd</span><span class="chev">${chevron()}</span><div class="console">Enter Console Command</div></div>
        <div class="cell c4">${icon(15, 15, svg`<circle cx="7.5" cy="7.5" r="6.6" stroke="#c0c0c0" stroke-width="1.5"/><path d="M12 3L3 12" stroke="#c0c0c0" stroke-width="1.5"/>`)}<span>Source Control Off</span><span class="grip">${icon(6, 6, svg`<path d="M6 0v6H0z" fill="#777"/>`)}</span></div>
      </div>`;
  }
}
